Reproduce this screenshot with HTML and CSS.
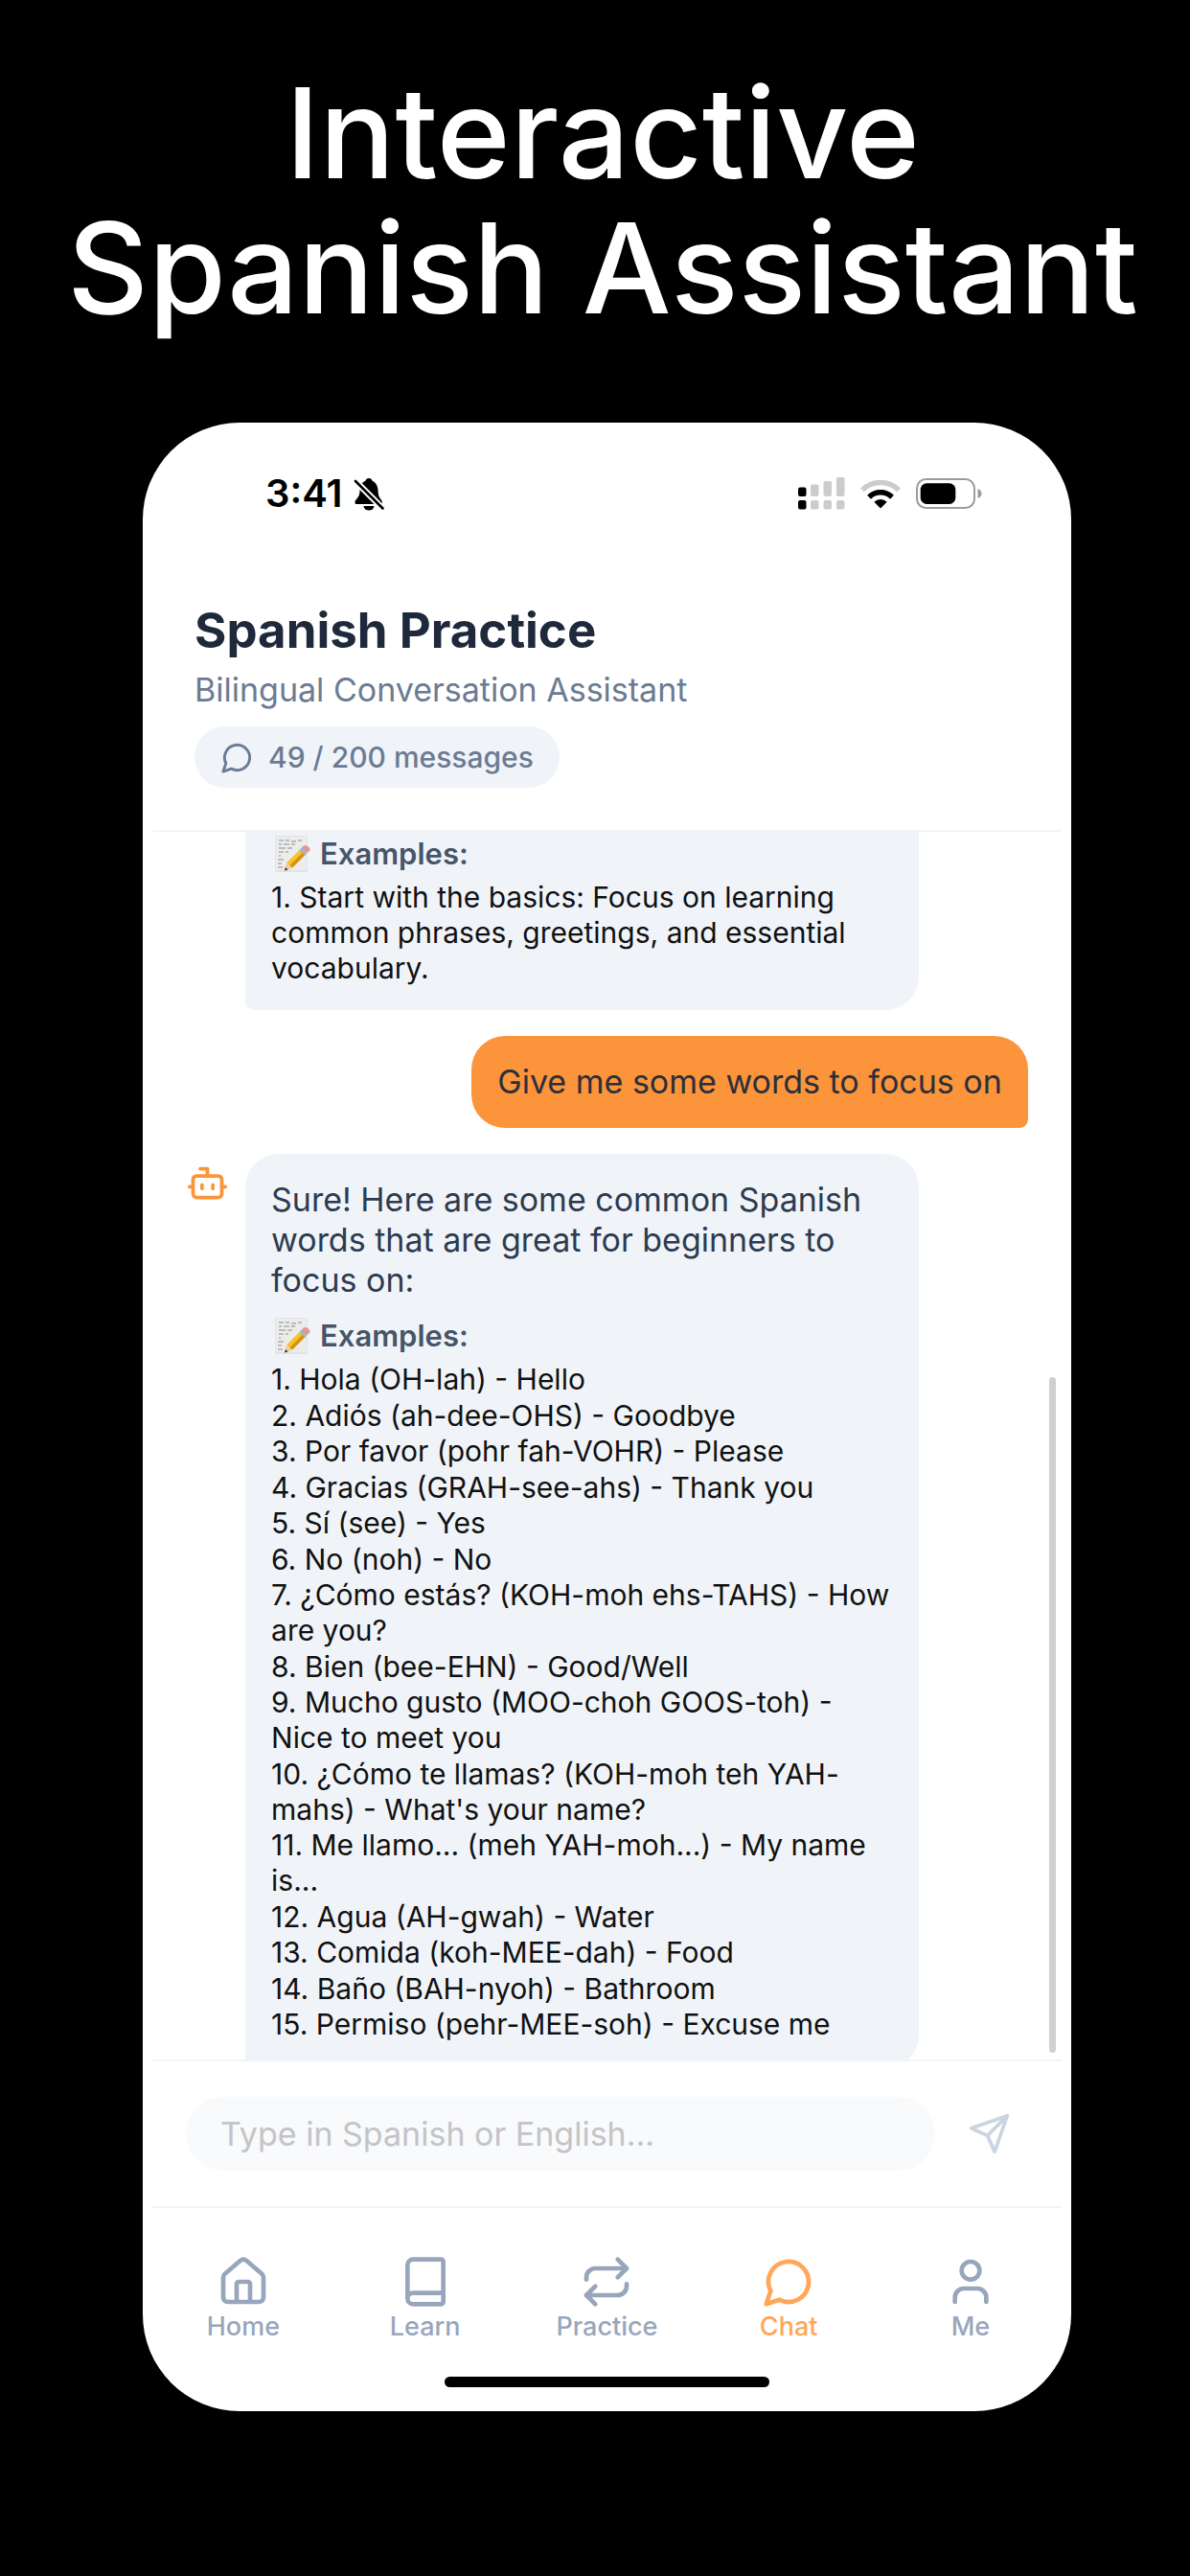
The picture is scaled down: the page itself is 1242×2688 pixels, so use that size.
FILE: index.html
```html
<!DOCTYPE html>
<html lang="en">
<head>
<meta charset="utf-8">
<meta name="viewport" content="width=device-width, initial-scale=1">
<title>Interactive Spanish Assistant</title>
<link rel="stylesheet" href="styles.css">
</head>
<body>
<svg class="sprite" aria-hidden="true">
  <symbol id="icon-message" viewBox="0 0 24 24"><path d="M7.9 20A9 9 0 1 0 4 16.1L2 22Z"/></symbol>
  <symbol id="icon-note" viewBox="0 0 43 38">
    <rect x="4" y="0" width="34" height="38" rx="1" fill="#e3e3e3"/>
    <rect x="5" y="1" width="32" height="35" fill="#ececec"/>
    <path d="M8 5h5m2 0h4m2 1h5m2-1h4M8 9h3m2 0h6m2 0h4M8 13h7m2 0h5M8 17h5m2 0h3M8 21h2M7 25h6m-6 4h4m-4 4h5" fill="none" stroke="#8b8b8b" stroke-width="1.2"/>
    <path d="M14 36.500 16.500 28 31.500 13l5.500 5.500L22 33.500Z" fill="#f7c325"/>
    <path d="M19.500 31 34.500 16l2.500 2.500L22 33.500Z" fill="#d98f12"/>
    <path d="M14 36.500 16.500 28l5.500 5.500Z" fill="#f0cf9c"/>
    <path d="M14 36.500l1-3.500 2.500 2.500Z" fill="#333"/>
    <path d="M29.500 15l4-4 5.500 5.500-4 4Z" fill="#a9b3ba"/>
    <path d="M32.500 12l1.500-1.500q2.500-1.500 5 1t1 4.500L38 17.500Z" fill="#ee9096"/>
  </symbol>
</svg>

<h1 class="headline">Interactive<br>Spanish Assistant</h1>

<div class="phone">
  <div class="status">
    <div class="status__left">
      <span class="status__time">3:41</span>
      <svg class="status__bell" viewBox="0 0 32 35" aria-hidden="true">
        <path d="M16 1c-2 0-3 1.200-3.400 2.600C8.500 5.300 6.500 9 6.500 13.500 6.500 19 5 20.500 2.500 23.500 1 25.300 1 28 3.200 28H28c2 0 2.500-2 1.300-3.800C27 21 25.700 19.500 25.500 13.500 25.300 9 23 5.300 19.400 3.600 19 2.200 18 1 16 1Z"/>
        <path d="M10.500 30h11a5.500 4.500 0 0 1-11 0Z"/>
        <path d="M1 3 31 33" stroke="#fff" stroke-width="6.500"/>
        <path d="M2 4 30.500 32.500" stroke="#000" stroke-width="2.600" stroke-linecap="round"/>
      </svg>
    </div>
    <div class="status__right">
      <svg class="status__signal" viewBox="0 0 49 34" aria-hidden="true">
        <g fill="#000"><rect y="10.500" width="8.500" height="9.500" rx="2"/><rect y="24" width="8.500" height="9.500" rx="2"/></g>
        <g fill="#ccc">
          <rect x="13" y="7.500" width="8.500" height="12.500" rx="2"/><rect x="26.500" y="4" width="8.500" height="16" rx="2"/><rect x="40" width="8.500" height="20" rx="2"/>
          <rect x="13" y="24" width="8.500" height="9.500" rx="2"/><rect x="26.500" y="24" width="8.500" height="9.500" rx="2"/><rect x="40" y="24" width="8.500" height="9.500" rx="2"/>
        </g>
      </svg>
      <svg class="status__wifi" viewBox="0 0 42 31" aria-hidden="true">
        <g fill="none" stroke-width="5.500"><path d="M1.900 11.400a27 27 0 0 1 38.200 0" stroke="#ccc"/><path d="M9 18.700a17 17 0 0 1 24 0" stroke="#000"/></g>
        <path d="M21 30.500 14.300 23.800a9.500 9.500 0 0 1 13.400 0Z"/>
      </svg>
      <svg class="status__battery" viewBox="0 0 69 32" aria-hidden="true">
        <rect x="1" y="1" width="60" height="30" rx="9.500" fill="none" stroke="#9c9c9c" stroke-width="2"/>
        <rect x="4.700" y="5.300" width="36.600" height="21.600" rx="6.500"/>
        <path d="M64.500 11q4 1.500 4 5t-4 5Z" fill="#9c9c9c"/>
      </svg>
    </div>
  </div>

  <div class="app">
    <header class="header">
      <h2 class="header__title">Spanish Practice</h2>
      <p class="header__subtitle">Bilingual Conversation Assistant</p>
      <div class="counter">
        <svg class="icon icon--small" aria-hidden="true"><use href="#icon-message"/></svg>
        <span>49 / 200 messages</span>
      </div>
    </header>

    <main class="chat">
      <div class="thread">
        <div class="message">
          <div class="avatar"></div>
          <div class="bubble bubble--bot bubble--continued">
            <h3 class="examples"><svg class="examples__icon" aria-hidden="true"><use href="#icon-note"/></svg>Examples:</h3>
            <ul class="list"><li>1. Start with the basics: Focus on learning common phrases, greetings, and essential vocabulary.</li></ul>
          </div>
        </div>

        <div class="message message--user">
          <p class="bubble bubble--user">Give me some words to focus on</p>
        </div>

        <div class="message">
          <div class="avatar">
            <svg class="icon icon--medium" viewBox="0 0 24 24" aria-hidden="true"><path d="M12 8V4H8"/><rect width="16" height="12" x="4" y="8" rx="2"/><path d="M2 14h2M20 14h2M15 13v2M9 13v2"/></svg>
          </div>
          <div class="bubble bubble--bot">
            <p class="bubble__text">Sure! Here are some common Spanish words that are great for beginners to focus on:</p>
            <h3 class="examples"><svg class="examples__icon" aria-hidden="true"><use href="#icon-note"/></svg>Examples:</h3>
            <ul class="list list--long">
              <li>1. Hola (OH-lah) - Hello</li>
              <li>2. Adiós (ah-dee-OHS) - Goodbye</li>
              <li>3. Por favor (pohr fah-VOHR) - Please</li>
              <li>4. Gracias (GRAH-see-ahs) - Thank you</li>
              <li>5. Sí (see) - Yes</li>
              <li>6. No (noh) - No</li>
              <li>7. ¿Cómo estás? (KOH-moh ehs-TAHS) - How are you?</li>
              <li>8. Bien (bee-EHN) - Good/Well</li>
              <li>9. Mucho gusto (MOO-choh GOOS-toh) - Nice to meet you</li>
              <li>10. ¿Cómo te llamas? (KOH-moh teh YAH-mahs) - What's your name?</li>
              <li>11. Me llamo... (meh YAH-moh...) - My name is...</li>
              <li>12. Agua (AH-gwah) - Water</li>
              <li>13. Comida (koh-MEE-dah) - Food</li>
              <li>14. Baño (BAH-nyoh) - Bathroom</li>
              <li>15. Permiso (pehr-MEE-soh) - Excuse me</li>
            </ul>
          </div>
        </div>
      </div>
      <div class="chat__scrollbar"></div>
    </main>

    <form class="composer">
      <input class="composer__input" type="text" aria-label="Message" placeholder="Type in Spanish or English...">
      <button class="composer__send" type="button" aria-label="Send">
        <svg class="icon icon--medium" viewBox="0 0 24 24" aria-hidden="true"><path d="m22 2-7 20-4-9-9-4Z"/><path d="M22 2 11 13"/></svg>
      </button>
    </form>

    <nav class="tabs">
      <a class="tab" href="#home">
        <svg class="icon icon--large" viewBox="0 0 24 24" aria-hidden="true"><path d="M15 21v-8a1 1 0 0 0-1-1h-4a1 1 0 0 0-1 1v8"/><path d="M3 10a2 2 0 0 1 .709-1.528l7-5.999a2 2 0 0 1 2.582 0l7 5.999A2 2 0 0 1 21 10v9a2 2 0 0 1-2 2H5a2 2 0 0 1-2-2z"/></svg>
        Home
      </a>
      <a class="tab" href="#learn">
        <svg class="icon icon--large" viewBox="0 0 24 24" aria-hidden="true"><path d="M4 19.500v-15A2.500 2.500 0 0 1 6.500 2H19a1 1 0 0 1 1 1v18a1 1 0 0 1-1 1H6.500a1 1 0 0 1 0-5H20"/></svg>
        Learn
      </a>
      <a class="tab" href="#practice">
        <svg class="icon icon--large" viewBox="0 0 24 24" aria-hidden="true"><path d="m17 2 4 4-4 4"/><path d="M3 11v-1a4 4 0 0 1 4-4h14"/><path d="m7 22-4-4 4-4"/><path d="M21 13v1a4 4 0 0 1-4 4H3"/></svg>
        Practice
      </a>
      <a class="tab tab--active" href="#chat" aria-current="page">
        <svg class="icon icon--large" aria-hidden="true"><use href="#icon-message"/></svg>
        Chat
      </a>
      <a class="tab" href="#me">
        <svg class="icon icon--large" viewBox="0 0 24 24" aria-hidden="true"><path d="M19 21v-2a4 4 0 0 0-4-4H9a4 4 0 0 0-4 4v2"/><circle cx="12" cy="7" r="4"/></svg>
        Me
      </a>
    </nav>
  </div>
  <div class="home-indicator"></div>
</div>
</body>
</html>
```
FILE: styles.css
```css
* {
  box-sizing: border-box;
  margin: 0;
  padding: 0;
}

body {
  display: flex;
  flex-direction: column;
  height: 100vh;
  padding: 68px 0 172px;
  background: #000;
  font-family: Inter, "Liberation Sans", sans-serif;
  font-size: 34px;
  line-height: 42px;
}

.sprite {
  display: none;
}

.headline {
  padding-left: 16px;
  color: #fff;
  font-size: 131px;
  font-weight: 500;
  line-height: 141px;
  text-align: center;
}

.phone {
  display: flex;
  flex: 1;
  flex-direction: column;
  min-height: 0;
  margin: 91px 10% 0 12%;
  padding-bottom: 25px;
  border-radius: 101px;
  background: #fff;
}

/* Status bar */

.status {
  display: flex;
  align-items: center;
  justify-content: space-between;
  padding: 50px 93px 0 128px;
}

.status__left,
.status__right {
  display: flex;
  align-items: center;
}

.status__left {
  gap: 11px;
}

.status__right {
  gap: 16px;
}

.status__time {
  font-size: 40px;
  font-weight: 600;
  line-height: 48px;
}

.status__bell {
  width: 32px;
  height: 35px;
}

.status__signal {
  width: 49px;
  height: 34px;
}

.status__wifi {
  width: 42px;
  height: 31px;
}

.status__battery {
  width: 69px;
  height: 32px;
}

/* Icons */

.icon {
  flex: none;
  fill: none;
  stroke: currentColor;
  stroke-width: 2;
  stroke-linecap: round;
  stroke-linejoin: round;
}

.icon--small {
  width: 35px;
  height: 35px;
}

.icon--medium {
  width: 45px;
  height: 45px;
}

.icon--large {
  width: 56px;
  height: 56px;
}

/* App shell */

.app {
  display: flex;
  flex: 1;
  flex-direction: column;
  min-height: 0;
  margin: 0 10px;
}

.header {
  display: flex;
  flex-direction: column;
  align-items: flex-start;
  padding: 89px 44px 44px;
  border-bottom: 2px solid #f1f5f9;
}

.header__title {
  color: #1e293b;
  font-size: 51px;
  font-weight: 700;
  line-height: 60px;
}

.header__subtitle {
  margin-top: 11px;
  color: #6b7b93;
}

.counter {
  display: flex;
  align-items: center;
  gap: 15px;
  height: 64px;
  margin-top: 17px;
  padding: 0 27px;
  border-radius: 32px;
  background: #f0f4f9;
  color: #6b7b93;
  font-size: 30px;
  font-weight: 500;
}

/* Conversation */

.chat {
  position: relative;
  display: flex;
  flex: 1;
  flex-direction: column;
  justify-content: flex-end;
  min-height: 0;
  overflow: hidden;
}

.chat__scrollbar {
  position: absolute;
  right: 6px;
  bottom: 7px;
  width: 7px;
  height: 55%;
  border-radius: 4px;
  background: #d0d0d0;
}

.thread {
  display: flex;
  flex: none;
  flex-direction: column;
  gap: 27px;
  margin-bottom: -9px;
  padding: 0 35px;
}

.message {
  display: flex;
  align-items: flex-start;
}

.message--user {
  justify-content: flex-end;
}

.avatar {
  display: flex;
  flex: none;
  width: 62px;
  padding-top: 8px;
  color: #fc943c;
}

.bubble {
  max-width: 80%;
  padding: 27px;
  border-radius: 35px;
}

.bubble--bot {
  width: 80%;
  border-bottom-left-radius: 9px;
  background: #f0f4f9;
  color: #2d3b50;
}

.bubble--continued {
  padding-bottom: 25px;
  border-top-left-radius: 0;
  border-top-right-radius: 0;
}

.bubble--user {
  border-bottom-right-radius: 9px;
  background: #fc943c;
  color: #2b2f3a;
}

.bubble__text {
  margin-bottom: 18px;
}

.examples {
  display: flex;
  align-items: center;
  gap: 8px;
  margin-bottom: 8px;
  color: #475569;
  font-size: 31px;
  font-weight: 600;
  line-height: 38px;
}

.examples__icon {
  width: 43px;
  height: 38px;
}

.list {
  display: flex;
  flex-direction: column;
  justify-content: space-between;
  color: #111;
  font-size: 30px;
  line-height: 37px;
  list-style: none;
}

.list--long {
  min-height: 710px;
}

/* Message field */

.composer {
  display: flex;
  align-items: center;
  gap: 17px;
  padding: 37px 35px;
  border-top: 2px solid #f1f5f9;
}

.composer__input {
  flex: 1;
  min-width: 0;
  height: 77px;
  padding: 0 36px;
  border: 0;
  border-radius: 39px;
  background: #f8fafc;
  color: #1e293b;
  font: inherit;
}

.composer__input::placeholder {
  color: #c4c4c6;
  opacity: 1;
}

.composer__send {
  display: flex;
  align-items: center;
  justify-content: center;
  width: 80px;
  height: 77px;
  border: 0;
  background: none;
  color: #cbd5e1;
}

/* Tab bar */

.tabs {
  display: flex;
  padding: 49px 0 36px;
  border-top: 2px solid #f1f5f9;
}

.tab {
  display: flex;
  flex: 1;
  flex-direction: column;
  align-items: center;
  gap: 3px;
  color: #97a6bd;
  font-size: 27px;
  font-weight: 500;
  line-height: 32px;
  text-decoration: none;
}

.tab--active {
  color: #ffa657;
}

.home-indicator {
  align-self: center;
  width: 35%;
  height: 11px;
  border-radius: 6px;
  background: #000;
}
```
